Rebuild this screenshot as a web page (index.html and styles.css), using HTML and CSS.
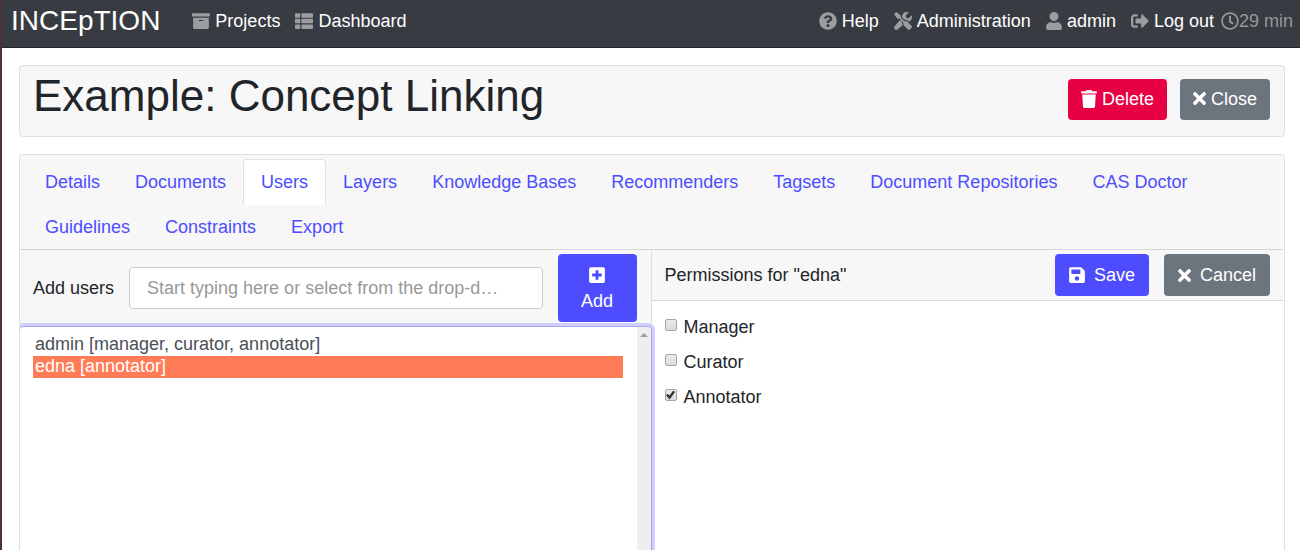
FILE: index.html
```html
<!DOCTYPE html>
<html lang="en">
<head>
<meta charset="utf-8">
<meta name="viewport" content="width=device-width, initial-scale=1">
<title>INCEpTION - Example: Concept Linking</title>
<link rel="stylesheet" href="styles.css">
</head>
<body>
<header class="navbar">
  <a class="brand" href="#">INCEpTION</a>
  <nav class="nav-main">
    <a class="nav-item" href="#"><svg class="icon" viewBox="0 0 512 512"><path d="M32 448c0 17.700 14.300 32 32 32h384c17.700 0 32-14.300 32-32V160H32v288zm160-212c0-6.600 5.400-12 12-12h104c6.600 0 12 5.400 12 12v8c0 6.600-5.400 12-12 12H204c-6.600 0-12-5.400-12-12v-8zM480 32H32C14.300 32 0 46.300 0 64v48c0 8.800 7.200 16 16 16h480c8.800 0 16-7.200 16-16V64c0-17.700-14.300-32-32-32z"/></svg>Projects</a>
    <a class="nav-item" href="#"><svg class="icon" viewBox="0 0 512 512"><path d="M24 32h102q24 0 24 24v80q0 24-24 24H24q-24 0-24-24V56q0-24 24-24zM206 32h282q24 0 24 24v80q0 24-24 24H206q-24 0-24-24V56q0-24 24-24zM24 192h102q24 0 24 24v80q0 24-24 24H24q-24 0-24-24v-80q0-24 24-24zM206 192h282q24 0 24 24v80q0 24-24 24H206q-24 0-24-24v-80q0-24 24-24zM24 352h102q24 0 24 24v80q0 24-24 24H24q-24 0-24-24v-80q0-24 24-24zM206 352h282q24 0 24 24v80q0 24-24 24H206q-24 0-24-24v-80q0-24 24-24z"/></svg>Dashboard</a>
  </nav>
  <nav class="nav-user">
    <a class="nav-item" href="#"><svg class="icon" viewBox="0 0 512 512"><path fill-rule="evenodd" d="M504 256c0 137-111 248-248 248S8 393 8 256 119 8 256 8s248 111 248 248zM262.700 90c-54.500 0-89.300 23-116.500 63.800-3.600 5.300-2.400 12.400 2.700 16.300l34.700 26.300c5.200 3.900 12.600 3 16.700-2.100 17.800-22.600 30.100-35.800 57.300-35.800 20.400 0 45.700 13.100 45.700 33 0 15-12.400 22.700-32.500 34C247.100 238.500 216 254.900 216 296v4c0 6.600 5.400 12 12 12h56c6.600 0 12-5.400 12-12v-1.300c0-28.500 83.200-29.600 83.200-106.700C379.200 134 319 90 262.700 90zM256 338c-25.400 0-46 20.600-46 46s20.600 46 46 46 46-20.600 46-46-20.600-46-46-46z"/></svg>Help</a>
    <a class="nav-item" href="#"><svg class="icon" viewBox="0 0 512 512"><path d="M501.100 395.700L384 278.600c-23.100-23.100-57.600-27.600-85.400-13.900L192 158.100V96L64 0 0 64l96 128h62.100l106.600 106.600c-13.600 27.800-9.200 62.300 13.900 85.400l117.100 117.100c14.600 14.600 38.200 14.600 52.700 0l52.700-52.700c14.500-14.600 14.500-38.200 0-52.700zM331.700 225c28.300 0 54.900 11 74.900 31l19.400 19.400c15.800-6.900 30.800-16.500 43.800-29.500 37.100-37.100 49.700-89.300 37.900-136.700-2.200-9-13.500-12.100-20.100-5.500l-74.400 74.400-67.900-11.300L334 98.900l74.400-74.400c6.600-6.600 3.400-17.900-5.700-20.200-47.400-11.700-99.600.900-136.600 37.900-28.500 28.500-41.900 66.100-41.200 103.600l82.100 82.100c8.100-1.900 16.500-2.900 24.700-2.900zM227.800 283.200l-56.700-56.700L18.700 402.800c-25 25-25 65.500 0 90.500s65.500 25 90.500 0l134.700-119.800c-17.500-29.600-22.800-60.700-16.100-90.300z"/></svg>Administration</a>
    <a class="nav-item" href="#"><svg class="icon icon-narrow" viewBox="0 0 448 512"><path d="M224 256c70.700 0 128-57.300 128-128S294.700 0 224 0 96 57.300 96 128s57.300 128 128 128zm89.600 32h-16.700c-22.200 10.200-46.900 16-72.900 16s-50.600-5.800-72.900-16h-16.700C60.200 288 0 348.200 0 422.400V464c0 26.500 21.500 48 48 48h352c26.500 0 48-21.500 48-48v-41.600c0-74.200-60.200-134.400-134.400-134.400z"/></svg>admin</a>
    <a class="nav-item" href="#"><svg class="icon" viewBox="0 0 512 512"><path d="M497 273L329 441c-15 15-41 4.500-41-17v-96H152c-13.300 0-24-10.700-24-24v-96c0-13.300 10.700-24 24-24h136V88c0-21.400 25.900-32 41-17l168 168c9.300 9.400 9.300 24.600 0 34zM192 436v-40c0-6.600-5.400-12-12-12H96c-17.700 0-32-14.300-32-32V160c0-17.700 14.300-32 32-32h84c6.600 0 12-5.400 12-12V76c0-6.600-5.400-12-12-12H96c-53 0-96 43-96 96v192c0 53 43 96 96 96h84c6.600 0 12-5.400 12-12z"/></svg>Log out</a>
    <span class="timer"><svg class="icon" viewBox="0 0 512 512"><path fill-rule="evenodd" d="M256 8C119 8 8 119 8 256s111 248 248 248 248-111 248-248S393 8 256 8zm0 448c-110.500 0-200-89.500-200-200S145.500 56 256 56s200 89.500 200 200-89.500 200-200 200zm61.800-104.400l-84.900-61.700c-3.100-2.300-4.900-5.900-4.900-9.700V116c0-6.600 5.400-12 12-12h32c6.600 0 12 5.400 12 12v141.700l66.800 48.600c5.400 3.900 6.500 11.400 2.600 16.800L334.600 349c-3.900 5.300-11.400 6.500-16.800 2.600z"/></svg>29 min</span>
  </nav>
</header>
<main class="content">
  <section class="title-card">
    <h1 class="title">Example: Concept Linking</h1>
    <button class="btn btn-danger" type="button"><svg class="icon icon-narrow" viewBox="0 0 448 512"><path d="M432 32H312l-9-19C298 4 291 0 281 0H167c-10 0-17 4-22 13l-9 19H16C7 32 0 39 0 48v32c0 9 7 16 16 16h416c9 0 16-7 16-16V48c0-9-7-16-16-16zM32 128l21 339c2 25 22 45 48 45h246c26 0 46-20 48-45l21-339z"/></svg>Delete</button>
    <button class="btn btn-secondary" type="button"><svg class="icon icon-x" viewBox="0 0 352 352"><path d="M243 176l100-100c12-12 12-32 0-44L320 9c-12-12-32-12-44 0L176 109 76 9C64-3 44-3 32 9L9 32c-12 12-12 32 0 44l100 100L9 276c-12 12-12 32 0 44l23 23c12 12 32 12 44 0l100-100 100 100c12 12 32 12 44 0l23-23c12-12 12-32 0-44z"/></svg>Close</button>
  </section>
  <section class="panel">
    <nav class="tabs">
      <a class="tab" href="#">Details</a>
      <a class="tab" href="#">Documents</a>
      <a class="tab tab-active" href="#" aria-current="page">Users</a>
      <a class="tab" href="#">Layers</a>
      <a class="tab" href="#">Knowledge Bases</a>
      <a class="tab" href="#">Recommenders</a>
      <a class="tab" href="#">Tagsets</a>
      <a class="tab" href="#">Document Repositories</a>
      <a class="tab" href="#">CAS Doctor</a>
      <a class="tab" href="#">Guidelines</a>
      <a class="tab" href="#">Constraints</a>
      <a class="tab" href="#">Export</a>
    </nav>
    <div class="columns">
      <div class="users">
        <form class="add-bar">
          <label for="add-users">Add users</label>
          <input class="add-input" id="add-users" type="text" placeholder="Start typing here or select from the drop-down list">
          <button class="btn btn-primary btn-add" type="button"><svg class="icon" viewBox="0 0 512 512"><path fill-rule="evenodd" d="M80 32h352c27 0 48 21 48 48v352c0 27-21 48-48 48H80c-27 0-48-21-48-48V80c0-27 21-48 48-48zM216 120v96h-96v80h96v96h80v-96h96v-80h-96v-96z"/></svg>Add</button>
        </form>
        <div class="list-wrap">
          <select class="user-list" size="10" aria-label="Users">
            <option>admin [manager, curator, annotator]</option>
            <option selected>edna [annotator]</option>
          </select>
          <div class="track" aria-hidden="true"><svg class="arrow" viewBox="0 0 8 4"><path d="M0 4L4 0l4 4z"/></svg></div>
        </div>
      </div>
      <form class="permissions">
        <div class="perm-bar">
          <span class="perm-title">Permissions for "edna"</span>
          <button class="btn btn-primary btn-wide" type="button"><svg class="icon icon-narrow" viewBox="0 0 448 512"><path fill-rule="evenodd" d="M434 130L350 46c-9-9-21-14-34-14H48C21 32 0 53 0 80v352c0 27 21 48 48 48h352c27 0 48-21 48-48V164c0-13-5-25-14-34zM224 416c-35 0-64-29-64-64s29-64 64-64 64 29 64 64-29 64-64 64zM320 111v101c0 7-5 12-12 12H76c-7 0-12-5-12-12V108c0-7 5-12 12-12h229c8 0 15 7 15 15z"/></svg>Save</button>
          <button class="btn btn-secondary btn-wide" type="button"><svg class="icon icon-x" viewBox="0 0 352 352"><path d="M243 176l100-100c12-12 12-32 0-44L320 9c-12-12-32-12-44 0L176 109 76 9C64-3 44-3 32 9L9 32c-12 12-12 32 0 44l100 100L9 276c-12 12-12 32 0 44l23 23c12 12 32 12 44 0l100-100 100 100c12 12 32 12 44 0l23-23c12-12 12-32 0-44z"/></svg>Cancel</button>
        </div>
        <div class="checks">
          <label class="check"><input class="box" type="checkbox">Manager</label>
          <label class="check"><input class="box" type="checkbox">Curator</label>
          <label class="check"><input class="box" type="checkbox" checked>Annotator</label>
        </div>
      </form>
    </div>
  </section>
</main>
</body>
</html>
```

FILE: styles.css
```css
*, *::before, *::after { box-sizing: border-box; }

body {
  margin: 0;
  height: 100vh;
  overflow: hidden;
  display: flex;
  flex-direction: column;
  border-left: 2px solid #4b3239;
  background: #fff;
  color: #212529;
  font: 18px/26px "Liberation Sans", Arial, sans-serif;
}

a { color: inherit; text-decoration: none; }
button, input, select { font: inherit; color: inherit; margin: 0; }

.icon { width: 18px; height: 18px; fill: currentColor; flex: none; }
.icon-narrow { width: 16px; }
.icon-x { width: 13px; height: 13px; }

.navbar {
  flex: none;
  display: flex;
  align-items: center;
  height: 48px;
  padding: 0 7px 6px 9px;
  background: #383c42;
  border-bottom: 1px solid #23262b;
  color: #fff;
}
.brand { font-size: 28px; margin-right: 32px; }
.nav-main, .nav-user { display: flex; align-items: center; gap: 15px; }
.nav-user { margin-left: auto; }
.nav-item { display: flex; align-items: center; gap: 5px; }
.nav-item .icon { fill: #9c9da0; }
.timer { display: flex; align-items: center; color: #96989b; margin-left: -8px; }

.content {
  flex: 1;
  min-height: 0;
  display: flex;
  flex-direction: column;
  gap: 17px;
  padding: 17px 15px 0 17px;
}

.title-card {
  flex: none;
  display: flex;
  align-items: flex-start;
  gap: 13px;
  padding: 13px 14px 15px 13px;
  border: 1px solid #dfdfdf;
  border-radius: 4px;
  background: #f7f7f7;
}
.title { flex: 1; margin: -9px 0 0; font-size: 44px; font-weight: 400; line-height: 50px; padding-top: 1px; }

.btn {
  display: flex;
  align-items: center;
  justify-content: center;
  gap: 5px;
  height: 41px;
  padding: 0 13px 2px;
  border: 0;
  border-radius: 4px;
  color: #fff;
}
.btn-danger { background: #e80045; }
.btn-secondary { background: #6c757d; }
.btn-primary { background: #4d4dff; }
.btn-wide { height: 42px; gap: 9px; padding: 0 14px; }
.btn-add { flex-direction: column; gap: 0; width: 79px; height: 68px; padding: 0; }
.btn-add .icon { margin: 4px 0; }

.panel {
  flex: 1;
  min-height: 0;
  display: flex;
  flex-direction: column;
  overflow: hidden;
  padding-right: 1px;
  border: 1px solid #dfdfdf;
  border-bottom: 0;
  border-radius: 4px 4px 0 0;
}
.tabs {
  display: flex;
  flex-wrap: wrap;
  padding: 4px 7px 0;
  background: #f7f7f7;
  border-bottom: 1px solid #d6d6d6;
}
.tab {
  height: 46px;
  margin: 0 -1px -1px 0;
  padding: 9px 17px;
  border: 1px solid transparent;
  border-bottom: 0;
  border-radius: 4px 4px 0 0;
  color: #4d4dff;
}
.tab-active { background: #fff; border-color: #dee2e6; }

.columns { flex: 1; min-height: 0; display: grid; grid-template-columns: 1fr 1fr; }
.users { display: flex; flex-direction: column; min-width: 0; }
.add-bar {
  display: flex;
  align-items: center;
  gap: 15px;
  padding: 4px 14px 4px 13px;
  background: #f7f7f7;
  border-right: 1px solid #dfdfdf;
}
.add-input {
  flex: 1;
  min-width: 0;
  height: 42px;
  padding: 0 40px 0 17px;
  border: 1px solid #ccc;
  border-radius: 4px;
  background: #fff;
  text-overflow: ellipsis;
}
.add-input::placeholder { color: #999; opacity: 1; }

.list-wrap { position: relative; z-index: 1; flex: 1; min-height: 0; display: flex; }
.user-list {
  flex: 1;
  min-width: 0;
  padding: 7px 28px 0 13px;
  border: 1px solid #a6a6ee;
  border-width: 1px 1px 0 0;
  border-radius: 4px 4px 0 0;
  outline: 0;
  box-shadow: 0 0 0 3px #d0d0ff;
  background: #fff;
  color: #495057;
  scrollbar-width: none;
}
.user-list option { height: 22px; min-height: 22px; padding: 0 2px; line-height: 22px; }
.user-list option:checked { background: #ff7c57 linear-gradient(#ff7c57, #ff7c57); color: #fff; }
.track {
  position: absolute;
  top: 1px;
  right: 1px;
  bottom: 0;
  width: 14px;
  display: flex;
  justify-content: center;
  padding-top: 6px;
  border-top-right-radius: 3px;
  background: #eee;
}
.arrow { width: 8px; height: 4px; fill: #a0a0a0; }

.permissions { min-width: 0; }
.perm-bar {
  display: flex;
  align-items: center;
  gap: 15px;
  padding: 4px 13px;
  background: #f7f7f7;
  border-bottom: 1px solid #d6d6d6;
}
.perm-title { flex: 1; }
.checks { display: flex; flex-direction: column; gap: 9px; padding: 13px; }
.check { display: flex; align-items: center; gap: 7px; }
.box {
  appearance: none;
  width: 12px;
  height: 12px;
  margin-bottom: 4px;
  border: 1px solid #a5a5a5;
  border-radius: 2px;
  background: linear-gradient(#e9e9e9, #dcdcdc);
  display: grid;
  place-items: center;
}
.box:checked::before {
  content: "";
  width: 9px;
  height: 9px;
  background: #333;
  clip-path: polygon(0 52%, 20% 36%, 38% 58%, 80% 0, 100% 16%, 40% 100%);
}
```
